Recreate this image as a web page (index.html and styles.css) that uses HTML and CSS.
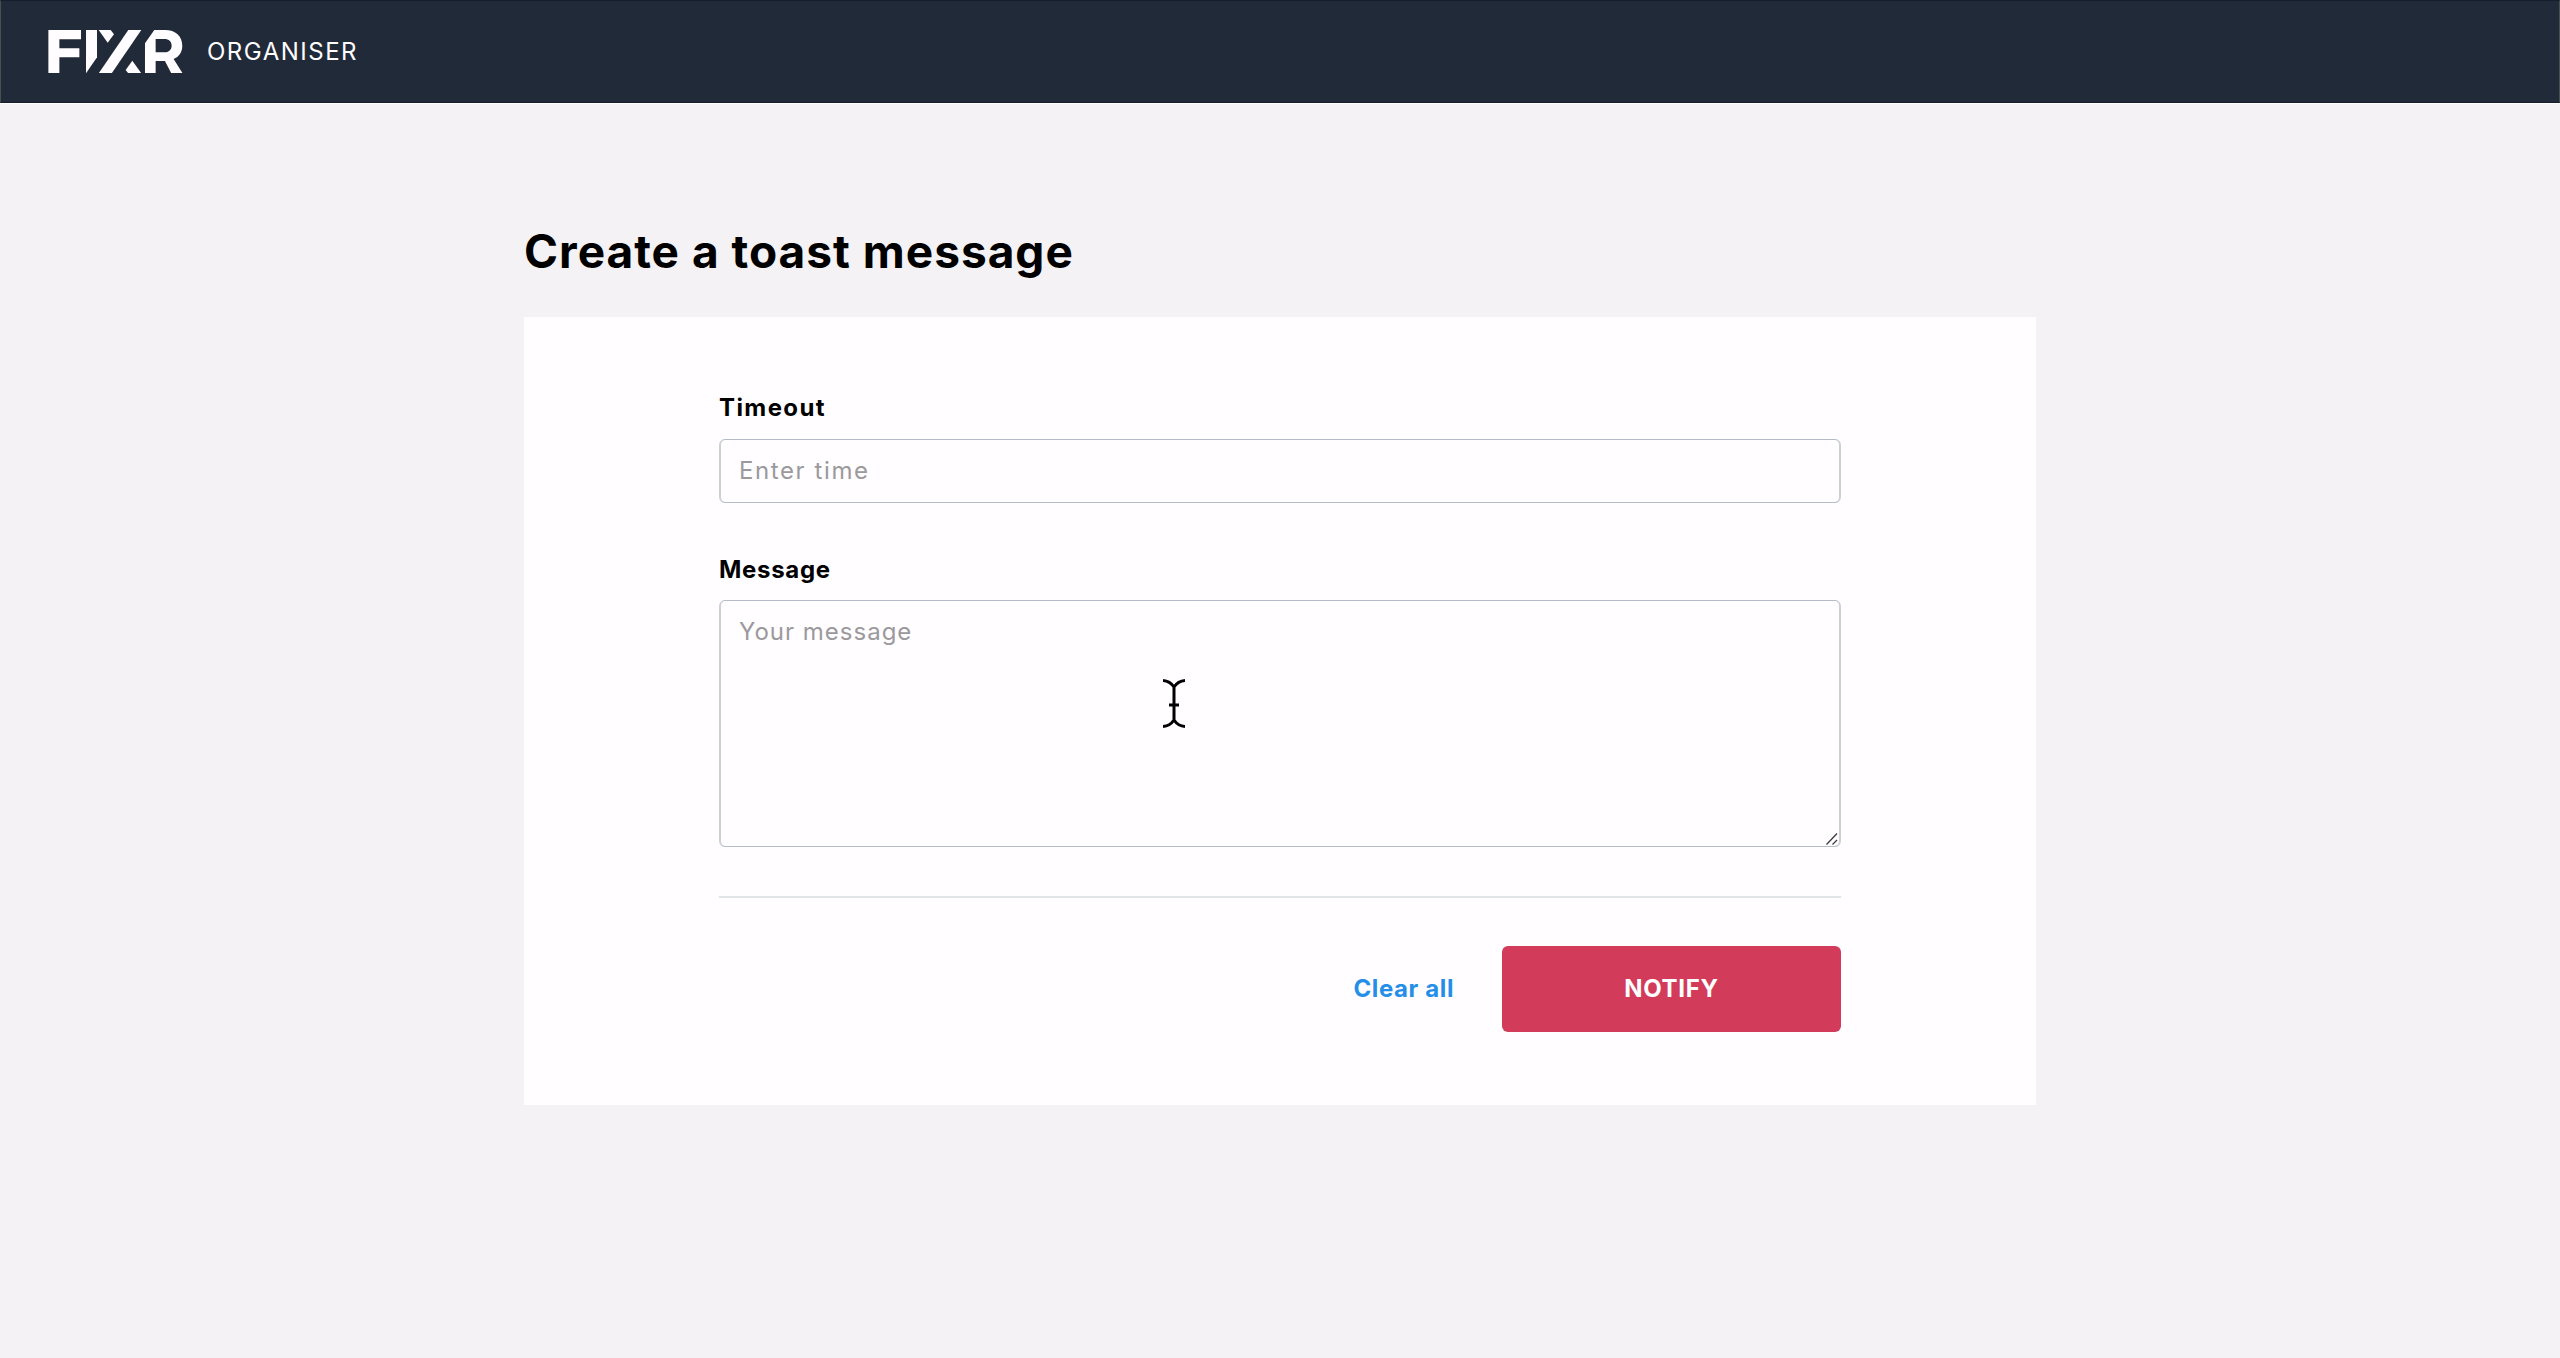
FILE: index.html
```html
<!DOCTYPE html>
<html lang="en">
<head>
  <meta charset="utf-8">
  <title>FIXR Organiser</title>
  <link rel="stylesheet" href="styles.css">
</head>
<body>
  <header class="topbar">
    <svg class="logo" viewBox="24 30 405 130" role="img" aria-label="FIXR">
      <path d="M25 30H123V58H58V85H118V112H58V160H25Z"/>
      <path d="M138 30H171V112L138 160Z"/>
      <path d="M176 30H212L222 43L203 68Z"/>
      <path d="M265 30H304L215 160H176Z"/>
      <path d="M277 122L304 160H265L257 150Z"/>
      <path fill-rule="evenodd" d="M343 30H375C407 30 427 48 427 77C427 97 417 110 401 117L428 160H394L375 123H347V160H315V70ZM347 57V97H373C387 97 395 89 395 77C395 65 387 57 373 57Z"/>
    </svg>
    <span class="product">ORGANISER</span>
  </header>
  <main class="page">
    <h1 class="title">Create a toast message</h1>
    <form class="card">
      <label class="label label-timeout" for="timeout">Timeout</label>
      <input class="field field-timeout" id="timeout" type="text" placeholder="Enter time">
      <label class="label label-message" for="message">Message</label>
      <div class="message-box">
        <textarea class="field field-message" id="message" placeholder="Your message"></textarea>
        <svg class="grip" viewBox="0 0 12 12"><path d="M.5 11.5L11 .5M6.5 11.5L11 7"/></svg>
        <svg class="caret" viewBox="0 0 22 50"><path d="M0 1.5Q7 2 11 8Q15 2 22 1.5M11 7V42M0 47.5Q7 47 11 41Q15 47 22 47.5M6 26H16"/></svg>
      </div>
      <hr class="divider">
      <div class="actions">
        <a class="clear">Clear all</a>
        <button class="notify" type="button">NOTIFY</button>
      </div>
    </form>
  </main>
</body>
</html>
```
FILE: styles.css
```css
* {
  box-sizing: border-box;
}

body {
  margin: 0;
  min-height: 1358px;
  background: #f4f2f5;
  color: #000;
  font-family: Inter, "Open Sans", sans-serif;
  font-size: 24px;
}

.topbar {
  display: flex;
  align-items: center;
  height: 103px;
  padding-left: 47px;
  background: #212a38;
  border: 1px solid #46504f;
  border-top-color: #141d2e;
  border-bottom-color: #141b29;
  box-shadow: 0 1px 0 #fff;
}

.logo {
  width: 135px;
  height: 43.3px;
  fill: #fffdff;
}

.product {
  margin-left: 24px;
  line-height: 30px;
  color: #fffdff;
  letter-spacing: 1.5px;
}

.page {
  width: 1512px;
  margin: 0 auto;
  padding-top: 118px;
}

.title {
  margin: 0 0 36px;
  font-size: 46px;
  font-weight: 650;
  line-height: 60px;
  letter-spacing: 1px;
}

.card {
  display: flex;
  flex-direction: column;
  height: 788px;
  padding: 76px 195px 73px;
  background: #fffdff;
}

.label {
  height: 30px;
  font-weight: 650;
  line-height: 30px;
}

.label-timeout {
  letter-spacing: 1.4px;
}

.label-message {
  letter-spacing: 0.7px;
}

.field {
  display: block;
  width: 100%;
  margin: 0;
  border: 2px solid #cdd1d5;
  border-top: 1px solid #b3bbc8;
  border-bottom: 1px solid #b3bbc8;
  border-radius: 6px;
  background: transparent;
  font: 400 24px/30px Inter, "Open Sans", sans-serif;
  padding: 16px 18px;
  outline: none;
  resize: none;
}

.field::placeholder {
  color: #9b999c;
  opacity: 1;
}

.field-timeout {
  height: 64px;
  margin: 16px 0 52px;
  padding: 15px 18px 17px;
  letter-spacing: 1.6px;
}

.message-box {
  position: relative;
  height: 247px;
  margin: 15px 0 49px;
}

.field-message {
  height: 247px;
  letter-spacing: 1px;
}

.grip {
  position: absolute;
  right: 3px;
  bottom: 2px;
  width: 12px;
  height: 12px;
  fill: none;
  stroke: #3c3c40;
  stroke-width: 1.3;
}

.caret {
  position: absolute;
  left: 444px;
  top: 79px;
  width: 22px;
  height: 50px;
  fill: none;
  stroke: #000;
  stroke-width: 3;
}

.divider {
  width: 100%;
  height: 2px;
  margin: 0 0 48px;
  border: 0;
  background: #e1e4e9;
}

.actions {
  display: flex;
  justify-content: flex-end;
  align-items: center;
  gap: 48px;
}

.clear {
  padding-bottom: 2px;
  color: #258ee8;
  font-weight: 650;
  letter-spacing: 0.6px;
}

.notify {
  width: 339px;
  height: 86px;
  padding: 0 0 2px;
  border: 0;
  border-radius: 6px;
  background: #d23b5a;
  color: #fff;
  font: 650 24px Inter, "Open Sans", sans-serif;
  letter-spacing: 0.7px;
}
```
